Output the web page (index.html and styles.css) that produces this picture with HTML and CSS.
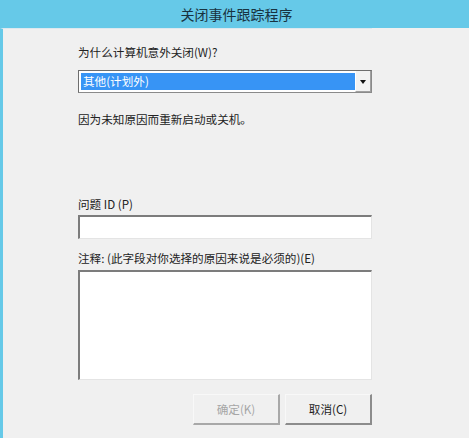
FILE: index.html
```html
<!DOCTYPE html>
<html lang="zh-CN">
<head>
<meta charset="utf-8">
<link rel="stylesheet" href="styles.css">
</head>
<body>
<div class="window">
  <div class="titlebar">关闭事件跟踪程序</div>
  <div class="content">
    <div class="label first">为什么计算机意外关闭(W)?</div>
    <div class="combo">
      <div class="combo-sel">其他(计划外)</div>
      <div class="combo-btn"><span class="arrow"></span></div>
    </div>
    <div class="label desc">因为未知原因而重新启动或关机。</div>
    <div class="label problem">问题 ID (P)</div>
    <div class="field input"></div>
    <div class="label note">注释: (此字段对你选择的原因来说是必须的)(E)</div>
    <div class="field textarea"></div>
    <div class="buttons">
      <div class="btn disabled">确定(K)</div>
      <div class="btn">取消(C)</div>
    </div>
  </div>
</div>
</body>
</html>
```

FILE: styles.css
```css
html, body {
  margin: 0;
  padding: 0;
  background: #f0f0f0;
}
body {
  font-family: "Noto Sans CJK SC", "Liberation Sans", sans-serif;
  font-size: 11.6px;
  color: #222222;
  width: 469px;
  height: 438px;
  overflow: hidden;
}
.window {
  display: flex;
  flex-direction: column;
  height: 438px;
}
.titlebar {
  height: 28px;
  line-height: 28px;
  background: #66c9e8;
  color: #183240;
  font-size: 14px;
  text-align: center;
  padding-left: 4px;
}
.content {
  flex: 1;
  border-left: 3px solid #66c9e8;
  border-top: 1px solid #dde8ef;
  padding-left: 75px;
  display: flex;
  flex-direction: column;
  width: 294px;
}
.label {
  height: 16px;
  line-height: 16px;
  white-space: nowrap;
}
.first { margin-top: 15px; }
.combo {
  margin-top: 10px;
  height: 23px;
  box-sizing: border-box;
  border: 1px solid #8a8a8a;
  border-top-color: #6e6e6e;
  border-left-color: #6e6e6e;
  background: #ffffff;
  display: flex;
  padding: 2px 0 0 2px;
}
.combo-sel {
  width: 274px;
  height: 17px;
  line-height: 17px;
  background: #3794f5;
  color: #ffffff;
  padding-left: 2px;
  box-sizing: border-box;
}
.combo-btn {
  flex: 1;
  margin-top: -2px;
  height: 21px;
  box-sizing: border-box;
  background: #f2f2f2;
  border-right: 1px solid #a0a0a0;
  border-bottom: 1px solid #a0a0a0;
  border-left: 1px solid #ffffff;
  display: flex;
  align-items: center;
  justify-content: center;
}
.arrow {
  width: 0;
  height: 0;
  border-left: 3.5px solid transparent;
  border-right: 3.5px solid transparent;
  border-top: 4px solid #111111;
  margin-top: 1px;
}
.desc { margin-top: 18px; }
.problem { margin-top: 69px; }
.field {
  box-sizing: border-box;
  background: #ffffff;
  border-top: 2px solid #7c7c7c;
  border-left: 2px solid #7c7c7c;
  border-right: 1px solid #e4e4e4;
  border-bottom: 1px solid #e4e4e4;
}
.input {
  margin-top: 3px;
  height: 24px;
}
.note { margin-top: 11px; }
.textarea {
  margin-top: 4px;
  height: 110px;
}
.buttons {
  margin-top: 14px;
  display: flex;
  justify-content: flex-end;
  gap: 5px;
}
.btn {
  width: 87px;
  height: 31px;
  box-sizing: border-box;
  border-top: 1px solid #f8f8f8;
  border-left: 1px solid #f8f8f8;
  border-right: 2px solid #8c8c8c;
  border-bottom: 2px solid #8c8c8c;
  background: #f0f0f0;
  display: flex;
  align-items: center;
  justify-content: center;
  color: #1c1c1c;
}
.btn.disabled {
  color: #a6a6a6;
  border-right-color: #a8a8a8;
  border-bottom-color: #a8a8a8;
}
```
